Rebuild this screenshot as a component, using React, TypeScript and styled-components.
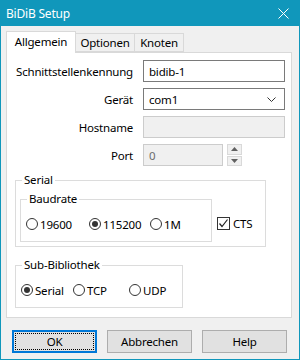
import React from 'react'
import styled, { createGlobalStyle } from 'styled-components'

const GlobalStyle = createGlobalStyle`
  html, body {
    margin: 0;
    padding: 0;
    background: #ffffff;
  }
  body {
    font-family: "Noto Sans", "Liberation Sans", sans-serif;
    font-size: 11.5px;
    letter-spacing: -0.2px;
    color: #000;
  }
  * {
    box-sizing: border-box;
  }
`

const Window = styled.div`
  width: 300px;
  height: 360px;
  border: 1px solid #1097bb;
  border-top: none;
  background: #f0f0f0;
  display: flex;
  flex-direction: column;
`

const TitleBar = styled.div`
  height: 26px;
  margin: 0 -1px;
  background: #1097bb;
  color: #fff;
  display: flex;
  align-items: center;
  justify-content: space-between;
  padding: 0 11px 0 6px;
  font-size: 12px;
`

const Body = styled.div`
  padding: 5px 0 0 5px;
  display: flex;
  flex-direction: column;
`

const TabStrip = styled.div`
  display: flex;
  align-items: flex-end;
  height: 21px;
  position: relative;
  z-index: 1;
`

const Tab = styled.div<{ $active?: boolean; $w: number }>`
  width: ${p => p.$w}px;
  height: ${p => (p.$active ? 22 : 19)}px;
  margin-bottom: ${p => (p.$active ? -1 : 0)}px;
  margin-left: -1px;
  &:first-child {
    margin-left: 0;
  }
  border: 1px solid #d9d9d9;
  border-bottom: ${p => (p.$active ? 'none' : '1px solid #d9d9d9')};
  background: ${p => (p.$active ? '#fff' : '#f0f0f0')};
  display: flex;
  align-items: center;
  justify-content: center;
  padding-bottom: ${p => (p.$active ? 2 : 0)}px;
`

const Panel = styled.div`
  width: 286px;
  height: 266px;
  border: 1px solid #d9d9d9;
  background: #fff;
  padding: 7px 0 0 0;
  display: flex;
  flex-direction: column;
`

const FormGrid = styled.div`
  display: grid;
  grid-template-columns: 126px 142px;
  column-gap: 10px;
  row-gap: 6px;
  grid-auto-rows: 22px;
`

const Label = styled.div`
  text-align: right;
  align-self: center;
  white-space: nowrap;
`

const Input = styled.div<{ $disabled?: boolean; $w?: number }>`
  width: ${p => (p.$w ? `${p.$w}px` : '100%')};
  height: 22px;
  border: 1px solid ${p => (p.$disabled ? '#cccccc' : '#7a7a7a')};
  background: ${p => (p.$disabled ? '#f0f0f0' : '#fff')};
  color: ${p => (p.$disabled ? '#6d6d6d' : '#000')};
  display: flex;
  align-items: center;
  justify-content: space-between;
  padding: 0 8px 0 5px;
`

const PortRow = styled.div`
  display: flex;
  align-items: center;
  gap: 4px;
`

const Spinner = styled.div`
  width: 15px;
  height: 22px;
  display: flex;
  flex-direction: column;
  gap: 1px;
`

const SpinButton = styled.div`
  flex: 1;
  border: 1px solid #d9d9d9;
  background: #f0f0f0;
  display: flex;
  align-items: center;
  justify-content: center;
`

const Group = styled.fieldset<{ $w: number }>`
  width: ${p => p.$w}px;
  margin: 0;
  padding: 0;
  min-inline-size: 0;
  border: 1px solid #dcdcdc;
`

const Legend = styled.legend`
  margin-left: 6px;
  padding: 0 2px;
  line-height: 16px;
`

const SerialGroup = styled(Group)`
  margin: 6px 0 0 8px;
  padding-bottom: 4px;
`

const SerialContent = styled.div`
  display: flex;
  align-items: flex-end;
`

const BaudGroup = styled(Group)`
  margin: 3px 0 0 4px;
`

const SubGroup = styled(Group)`
  margin: 10px 0 0 8px;
`

const RadioRow = styled.div`
  display: flex;
  align-items: center;
  height: 16px;
  margin: 9px 0 9px 5px;
`

const Option = styled.div<{ $w?: number }>`
  display: flex;
  align-items: center;
  gap: 2px;
  width: ${p => (p.$w ? `${p.$w}px` : 'auto')};
  white-space: nowrap;
`

const RadioCircle = styled.span<{ $on?: boolean }>`
  width: 12px;
  height: 12px;
  border-radius: 50%;
  border: 1px solid #333;
  display: flex;
  align-items: center;
  justify-content: center;
  flex-shrink: 0;
  &::after {
    content: '';
    width: 6px;
    height: 6px;
    border-radius: 50%;
    background: ${p => (p.$on ? '#333' : 'transparent')};
  }
`

const CheckOption = styled.div`
  display: flex;
  align-items: center;
  gap: 3px;
  margin: 0 0 11px 5px;
`

const CheckBox = styled.span`
  width: 13px;
  height: 13px;
  border: 1px solid #333;
  display: flex;
  align-items: center;
  justify-content: center;
`

const ButtonRow = styled.div`
  display: flex;
  gap: 10px;
  margin: 12px 0 0 6px;
`

const Button = styled.div<{ $default?: boolean }>`
  width: 85px;
  height: 23px;
  background: #e1e1e1;
  border: ${p => (p.$default ? '2px solid #0078d7' : '1px solid #adadad')};
  display: flex;
  align-items: center;
  justify-content: center;
  padding: ${p => (p.$default ? '1px' : '0')};
`

const FocusRect = styled.div`
  width: 100%;
  height: 100%;
  border: 1px dotted #000;
  display: flex;
  align-items: center;
  justify-content: center;
`

const CloseIcon = () => (
  <svg width="11" height="11" viewBox="0 0 11 11">
    <path d="M0.5 0.5 L10.5 10.5 M10.5 0.5 L0.5 10.5" stroke="#fff" strokeWidth="1" />
  </svg>
)

const Chevron = () => (
  <svg width="9" height="5" viewBox="0 0 9 5">
    <path d="M0.5 0.5 L4.5 4.5 L8.5 0.5" stroke="#333" strokeWidth="1" fill="none" />
  </svg>
)

const Arrow = ({ up }: { up?: boolean }) => (
  <svg width="7" height="4" viewBox="0 0 7 4">
    <path d={up ? 'M0 4 L3.5 0 L7 4 Z' : 'M0 0 L3.5 4 L7 0 Z'} fill="#606060" />
  </svg>
)

const Check = () => (
  <svg width="11" height="11" viewBox="0 0 11 11">
    <path d="M1.5 5.5 L4 8.5 L9.5 1.5" stroke="#222" strokeWidth="1.2" fill="none" />
  </svg>
)

const Radio = ({ label, on, w }: { label: string; on?: boolean; w?: number }) => (
  <Option $w={w}>
    <RadioCircle $on={on} />
    <span>{label}</span>
  </Option>
)

export default function App() {
  return (
    <>
      <GlobalStyle />
      <Window>
        <TitleBar>
          <span>BiDiB Setup</span>
          <CloseIcon />
        </TitleBar>
        <Body>
          <TabStrip>
            <Tab $active $w={70}>Allgemein</Tab>
            <Tab $w={60}>Optionen</Tab>
            <Tab $w={50}>Knoten</Tab>
          </TabStrip>
          <Panel>
            <FormGrid>
              <Label>Schnittstellenkennung</Label>
              <Input>bidib-1</Input>
              <Label>Gerät</Label>
              <Input>
                <span>com1</span>
                <Chevron />
              </Input>
              <Label>Hostname</Label>
              <Input $disabled />
              <Label>Port</Label>
              <PortRow>
                <Input $disabled $w={80}>0</Input>
                <Spinner>
                  <SpinButton><Arrow up /></SpinButton>
                  <SpinButton><Arrow /></SpinButton>
                </Spinner>
              </PortRow>
            </FormGrid>
            <SerialGroup $w={251}>
              <Legend>Serial</Legend>
              <SerialContent>
                <BaudGroup $w={192}>
                  <Legend>Baudrate</Legend>
                  <RadioRow>
                    <Radio label="19600" w={63} />
                    <Radio label="115200" on w={61} />
                    <Radio label="1M" />
                  </RadioRow>
                </BaudGroup>
                <CheckOption>
                  <CheckBox><Check /></CheckBox>
                  <span>CTS</span>
                </CheckOption>
              </SerialContent>
            </SerialGroup>
            <SubGroup $w={168}>
              <Legend>Sub-Bibliothek</Legend>
              <RadioRow>
                <Radio label="Serial" on w={52} />
                <Radio label="TCP" w={56} />
                <Radio label="UDP" />
              </RadioRow>
            </SubGroup>
          </Panel>
          <ButtonRow>
            <Button $default><FocusRect>OK</FocusRect></Button>
            <Button>Abbrechen</Button>
            <Button>Help</Button>
          </ButtonRow>
        </Body>
      </Window>
    </>
  )
}
